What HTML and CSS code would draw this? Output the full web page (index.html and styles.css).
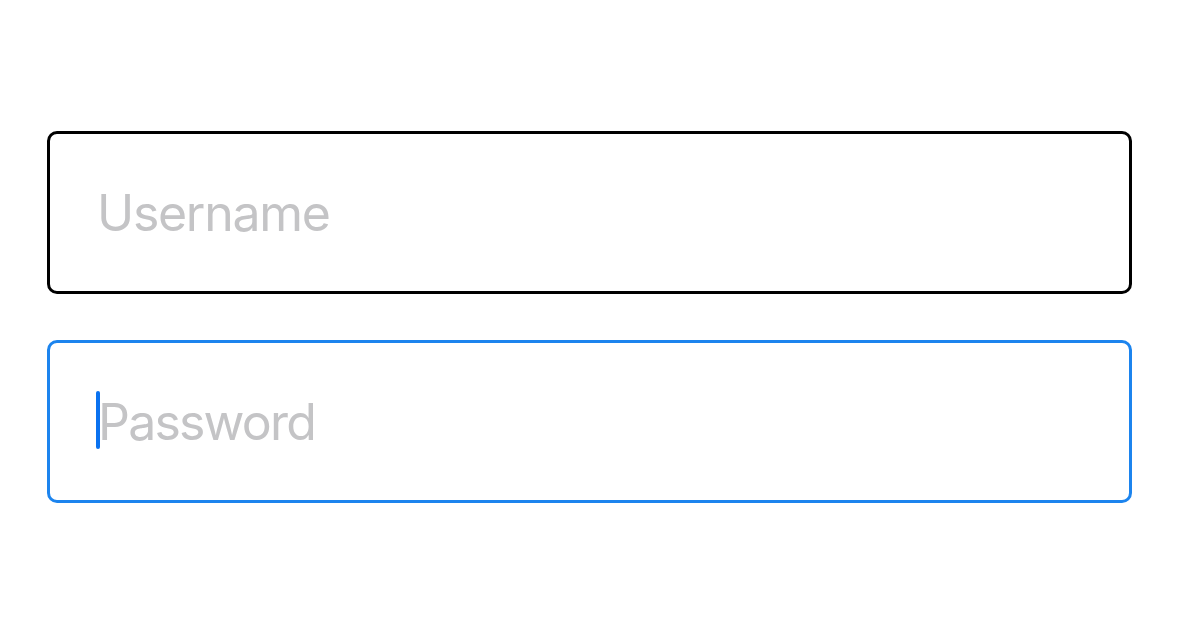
FILE: index.html
```html
<!DOCTYPE html>
<html lang="en">
  <head>
    <meta charset="UTF-8" />
    <meta name="viewport" content="width=device-width, initial-scale=1.0" />
    <title>Login</title>
    <link rel="stylesheet" href="styles.css">
  </head>
  <body>
    <div class="form">
      <div class="field">
        <span class="placeholder">Username</span>
      </div>
      <div class="field focused">
        <span class="caret"></span>
        <span class="placeholder">Password</span>
      </div>
    </div>
  </body>
</html>
```

FILE: styles.css
```css
body {
  margin: 0;
  background: #ffffff;
  font-family: Inter, "Noto Sans", sans-serif;
}

.form {
  display: flex;
  flex-direction: column;
  gap: 46px;
  padding: 131px 47px 0 47px;
}

.field {
  box-sizing: border-box;
  height: 163px;
  display: flex;
  align-items: center;
  padding-left: 47px;
  border: 3px solid #000000;
  border-radius: 10px;
}

.field.focused {
  border-color: #1c84ee;
  padding-left: 46px;
}

.placeholder {
  font-size: 50px;
  color: #c4c4c6;
  letter-spacing: -1.3px;
}

.focused .placeholder {
  letter-spacing: -1.8px;
  margin-left: -2px;
}

.caret {
  width: 4px;
  height: 58px;
  border-radius: 2px;
  background: #0a72f0;
  margin: 0 0 4px 0;
}
```
